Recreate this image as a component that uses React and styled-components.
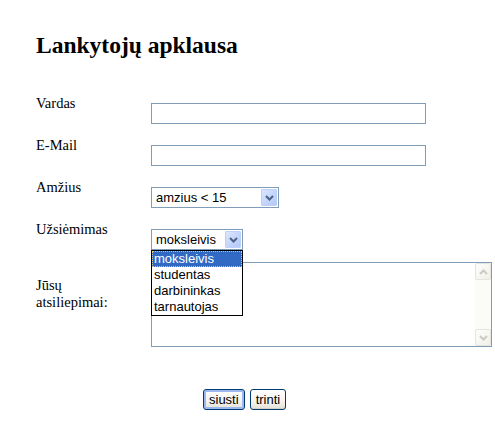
import React from 'react';
import styled, { createGlobalStyle } from 'styled-components';

const GlobalStyle = createGlobalStyle`
  html, body {
    margin: 0;
    padding: 0;
    background: #fff;
  }
  body {
    font-family: 'Liberation Serif', 'Times New Roman', serif;
    color: #000;
  }
`;

const Page = styled.div`
  width: 495px;
  height: 442px;
  box-sizing: border-box;
  padding: 32px 0 0 36px;
  overflow: hidden;
`;

const Title = styled.h2`
  margin: 0 0 36px;
  font-family: 'Liberation Serif', 'Times New Roman', serif;
  font-size: 23.5px;
  line-height: 27px;
  font-weight: bold;
`;

const Row = styled.div`
  display: grid;
  grid-template-columns: 115px 1fr;
  height: ${(p) => p.h || 42}px;
`;

const Label = styled.div`
  font-family: 'Liberation Serif', 'Times New Roman', serif;
  font-size: 14.5px;
  line-height: 17px;
  padding-top: ${(p) => p.top ?? 0}px;
`;

const Field = styled.div`
  position: relative;
  padding-top: ${(p) => p.top ?? 8}px;
`;

const TextInput = styled.input`
  display: block;
  box-sizing: border-box;
  width: 275px;
  height: 21px;
  margin: 0;
  border: 1px solid #7f9db9;
  background: #fff;
  outline: none;
`;

const SelectBox = styled.div`
  box-sizing: border-box;
  width: ${(p) => p.w}px;
  height: 21px;
  border: 1px solid #7f9db9;
  background: #fff;
  display: flex;
  align-items: center;
  padding: 0 1px 0 4px;
  font-family: 'Liberation Sans', Arial, sans-serif;
  font-size: 13px;
`;

const SelectValue = styled.span`
  flex: 1;
`;

const ArrowButton = styled.span`
  box-sizing: border-box;
  width: 16px;
  height: 17px;
  border: 1px solid #bdd0f6;
  border-radius: 1px;
  background: linear-gradient(135deg, #dce7fe 0%, #c4d5fc 55%, #b4c8f7 100%);
  display: flex;
  align-items: center;
  justify-content: center;
`;

const DropList = styled.ul`
  position: absolute;
  left: 0;
  top: 29px;
  z-index: 2;
  box-sizing: border-box;
  width: 92px;
  margin: 0;
  padding: 0;
  list-style: none;
  border: 1px solid #000;
  background: #fff;
  font-family: 'Liberation Sans', Arial, sans-serif;
  font-size: 13px;
`;

const DropItem = styled.li`
  box-sizing: border-box;
  height: 16px;
  line-height: 14px;
  padding: 0 1px;
  border: 1px ${(p) => (p.active ? 'dotted #e8c878' : 'solid transparent')};
  background: ${(p) => (p.active ? '#316ac5' : '#fff')};
  color: ${(p) => (p.active ? '#fff' : '#000')};
`;

const AreaBox = styled.div`
  box-sizing: border-box;
  width: 341px;
  height: 85px;
  border: 1px solid #7f9db9;
  background: #fff;
  display: flex;
`;

const AreaText = styled.textarea`
  flex: 1;
  border: none;
  margin: 0;
  padding: 2px;
  resize: none;
  outline: none;
  background: transparent;
`;

const ScrollBar = styled.div`
  width: 16px;
  background: #fbfbf7;
  display: flex;
  flex-direction: column;
  justify-content: space-between;
`;

const ScrollButton = styled.span`
  box-sizing: border-box;
  height: 17px;
  border: 1px solid #e6e5dc;
  border-radius: 2px;
  background: linear-gradient(135deg, #fdfdfb 0%, #f1f0ea 100%);
  display: flex;
  align-items: center;
  justify-content: center;
`;

const Buttons = styled.div`
  display: flex;
  gap: 5px;
  padding: 42px 0 0 167px;
`;

const Button = styled.button`
  box-sizing: border-box;
  height: 21px;
  padding: 0 5px;
  margin: 0;
  border: 1px solid #003c74;
  border-radius: 3px;
  background: linear-gradient(#ffffff 0%, #f4f3ee 60%, #e3e1d6 100%);
  box-shadow: ${(p) => (p.primary ? 'inset 0 0 0 2px #9db8ef' : 'inset 0 -1px 0 #d6d0c5')};
  font-family: 'Liberation Sans', Arial, sans-serif;
  font-size: 13px;
  color: #000;
`;

const Chevron = ({ color, up }) => (
  <svg width="9" height="6" viewBox="0 0 9 6">
    <path
      d={up ? 'M1 5 L4.5 1.5 L8 5' : 'M1 1 L4.5 4.5 L8 1'}
      fill="none"
      stroke={color}
      strokeWidth="2"
    />
  </svg>
);

function Select({ value, width }) {
  return (
    <SelectBox w={width}>
      <SelectValue>{value}</SelectValue>
      <ArrowButton>
        <Chevron color="#4d6185" />
      </ArrowButton>
    </SelectBox>
  );
}

const jobs = ['moksleivis', 'studentas', 'darbininkas', 'tarnautojas'];

export default function App() {
  return (
    <Page>
      <GlobalStyle />
      <Title>Lankytojų apklausa</Title>
      <Row>
        <Label>Vardas</Label>
        <Field>
          <TextInput type="text" />
        </Field>
      </Row>
      <Row>
        <Label>E-Mail</Label>
        <Field>
          <TextInput type="text" />
        </Field>
      </Row>
      <Row>
        <Label>Amžius</Label>
        <Field>
          <Select value="amzius < 15" width={128} />
        </Field>
      </Row>
      <Row h={41}>
        <Label>Užsiėmimas</Label>
        <Field>
          <Select value="moksleivis" width={92} />
          <DropList>
            {jobs.map((j, i) => (
              <DropItem key={j} active={i === 0}>
                {j}
              </DropItem>
            ))}
          </DropList>
        </Field>
      </Row>
      <Row h={85}>
        <Label top={15}>
          Jūsų
          <br />
          atsiliepimai:
        </Label>
        <Field top={0}>
          <AreaBox>
            <AreaText />
            <ScrollBar>
              <ScrollButton>
                <Chevron color="#cdcbc0" up />
              </ScrollButton>
              <ScrollButton>
                <Chevron color="#cdcbc0" />
              </ScrollButton>
            </ScrollBar>
          </AreaBox>
        </Field>
      </Row>
      <Buttons>
        <Button primary>siusti</Button>
        <Button>trinti</Button>
      </Buttons>
    </Page>
  );
}
